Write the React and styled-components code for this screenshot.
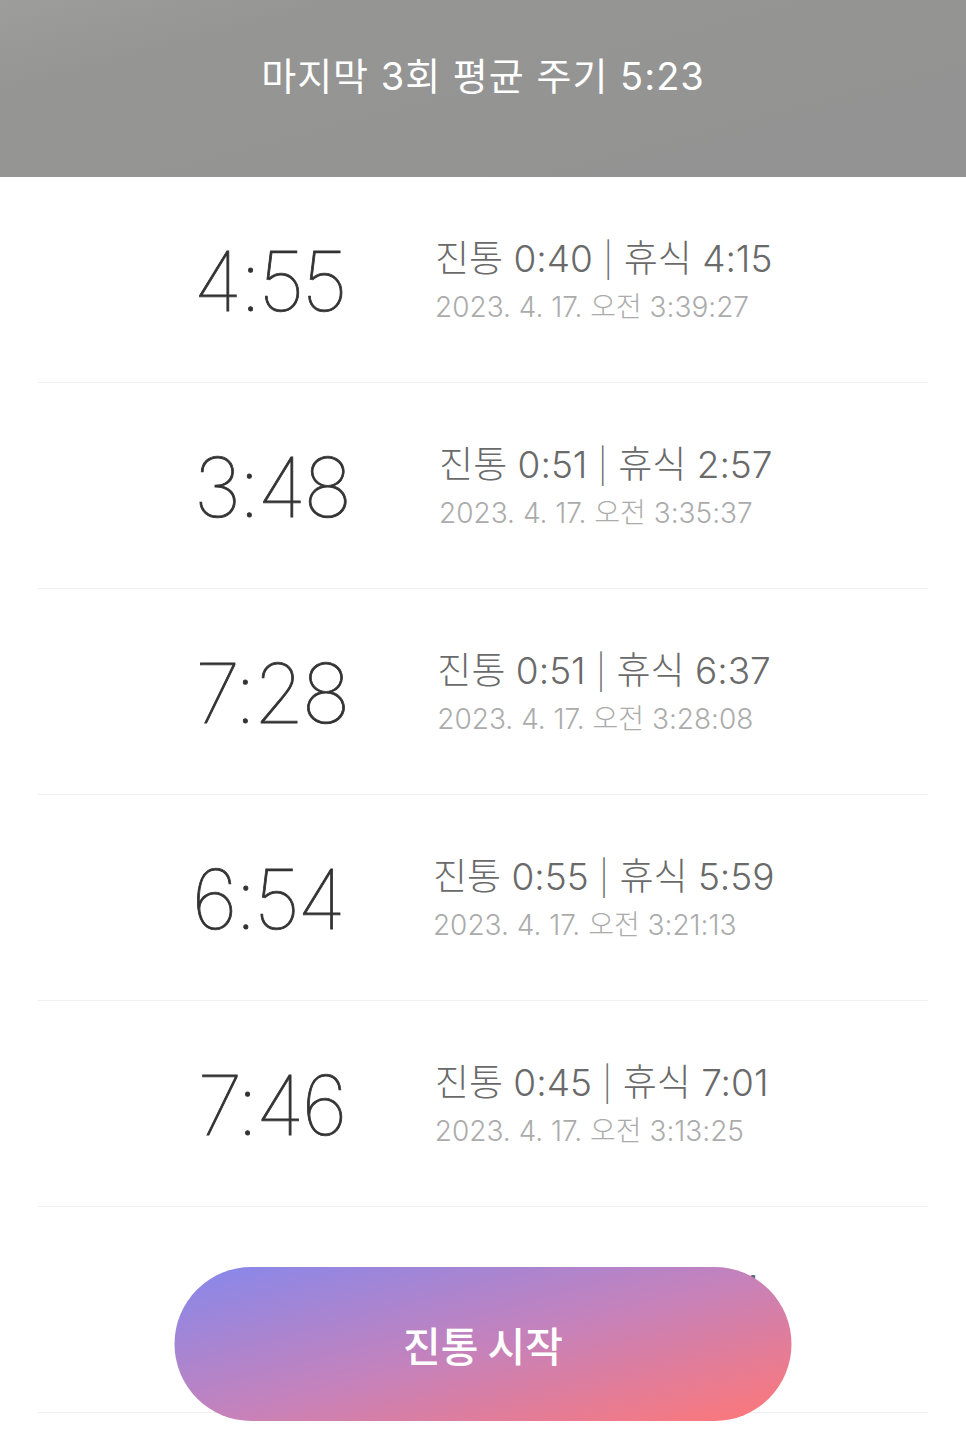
import styled, { createGlobalStyle } from 'styled-components'

const GlobalStyle = createGlobalStyle`
  html, body {
    margin: 0;
    padding: 0;
    background: #ffffff;
  }
  body {
    font-family: "Inter", "Noto Sans CJK KR", sans-serif;
    -webkit-font-smoothing: antialiased;
  }
`;

const records = [
  { cycle: '4:55', pain: '0:40', rest: '4:15', at: '2023. 4. 17. 오전 3:39:27' },
  { cycle: '3:48', pain: '0:51', rest: '2:57', at: '2023. 4. 17. 오전 3:35:37' },
  { cycle: '7:28', pain: '0:51', rest: '6:37', at: '2023. 4. 17. 오전 3:28:08' },
  { cycle: '6:54', pain: '0:55', rest: '5:59', at: '2023. 4. 17. 오전 3:21:13' },
  { cycle: '7:46', pain: '0:45', rest: '7:01', at: '2023. 4. 17. 오전 3:13:25' },
  { cycle: '7:12', pain: '0:41', rest: '6:31', at: '2023. 4. 17. 오전 3:05:39' },
];

const App = () => {
  return (
    <Page>
      <GlobalStyle />
      <Header>마지막 3회 평균 주기 5:23</Header>

      <List>
        {records.map((r) => (
          <Row key={r.at}>
            <Cycle>{r.cycle}</Cycle>
            <Info>
              <Detail>
                진통 {r.pain} <Pipe>|</Pipe> 휴식 {r.rest}
              </Detail>
              <Stamp>{r.at}</Stamp>
            </Info>
          </Row>
        ))}
      </List>

      <StartButton>진통 시작</StartButton>
    </Page>
  );
};

export default App;

const Page = styled.div`
  width: 966px;
  min-height: 1455px;
  background: #ffffff;
`;

const Header = styled.header`
  height: 177px;
  display: flex;
  align-items: center;
  justify-content: center;
  padding-bottom: 30px;
  box-sizing: border-box;
  background: linear-gradient(165deg, #9d9d9b 0%, #959594 22%, #939393 100%);
  color: #ffffff;
  font-family: "Inter", "Noto Sans CJK KR", sans-serif;
  font-size: 38px;
  font-weight: 400;
  letter-spacing: 1px;
`;

const List = styled.div`
  display: flex;
  flex-direction: column;
  padding: 0 38px;
`;

const Row = styled.div`
  height: 206px;
  box-sizing: border-box;
  border-bottom: 1.5px solid #f0f0f0;
  display: flex;
  align-items: center;
  justify-content: center;
  gap: 90px;
  padding-top: 4px;
`;

const Cycle = styled.div`
  font-family: "Inter", sans-serif;
  font-size: 82px;
  font-weight: 100;
  letter-spacing: -3px;
  color: #333333;
  -webkit-text-stroke: 0.8px #333333;
  line-height: 1;
`;

const Info = styled.div`
  display: flex;
  flex-direction: column;
  gap: 10px;
`;

const Detail = styled.div`
  font-family: "Inter", "Noto Sans CJK KR", sans-serif;
  font-size: 37px;
  font-weight: 300;
  color: #6a6a6a;
  line-height: 1.15;
`;

const Pipe = styled.span`
  font-size: 34px;
  font-weight: 200;
`;

const Stamp = styled.div`
  font-family: "Inter", "Noto Sans CJK KR", sans-serif;
  font-size: 28px;
  font-weight: 300;
  color: #ababab;
  line-height: 1.2;
`;

const StartButton = styled.button`
  position: fixed;
  left: 50%;
  bottom: 34px;
  transform: translateX(-50%);
  width: 617px;
  height: 154px;
  border: none;
  border-radius: 77px;
  background: linear-gradient(165deg, #8588ec 0%, #c482bc 50%, #ff7776 100%);
  color: #ffffff;
  font-family: "Noto Sans CJK KR", sans-serif;
  font-size: 41px;
  font-weight: 500;
  cursor: pointer;
`;
